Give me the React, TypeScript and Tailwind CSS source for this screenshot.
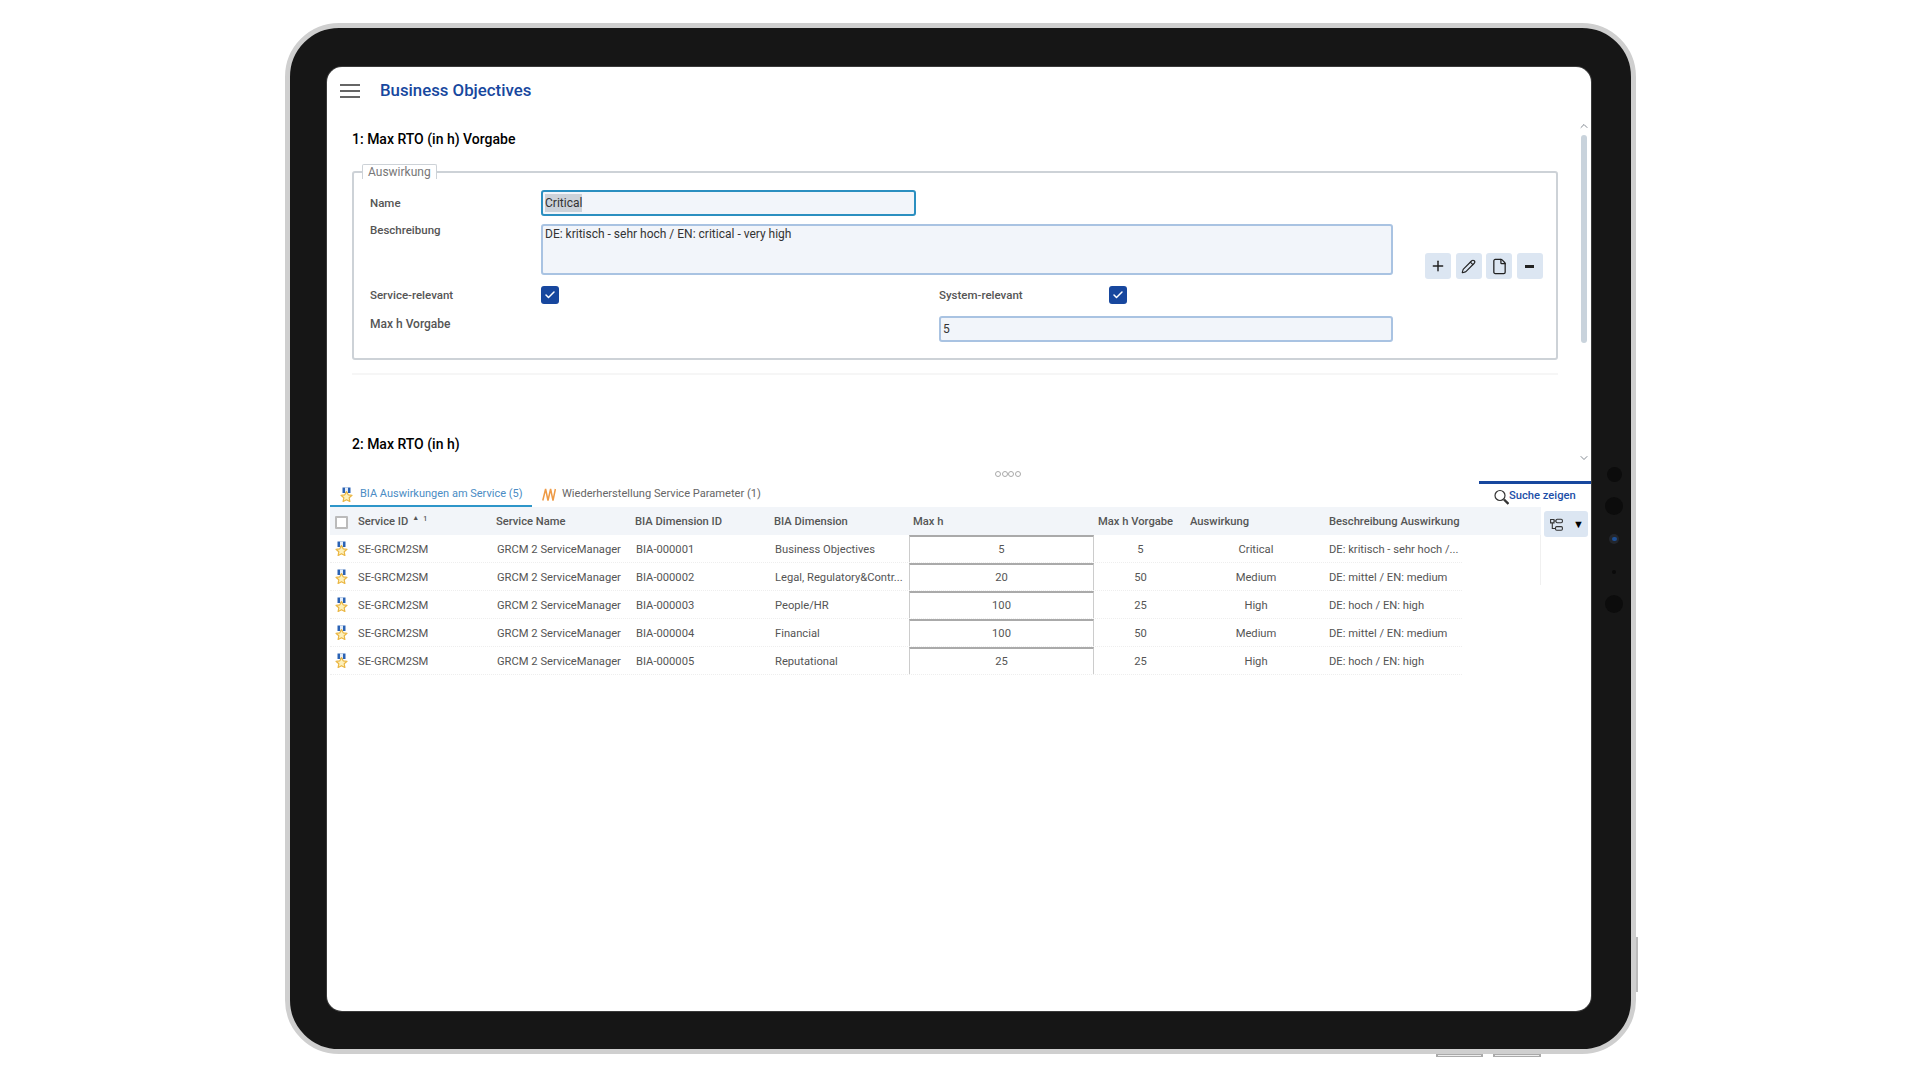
import { Check, ChevronDown, ChevronUp, File, Pencil, Plus } from 'lucide-react';

const rows = [
  { id: 'BIA-000001', dim: 'Business Objectives', max: '5', vorgabe: '5', impact: 'Critical', desc: 'DE: kritisch - sehr hoch /...' },
  { id: 'BIA-000002', dim: 'Legal, Regulatory&Contr...', max: '20', vorgabe: '50', impact: 'Medium', desc: 'DE: mittel / EN: medium' },
  { id: 'BIA-000003', dim: 'People/HR', max: '100', vorgabe: '25', impact: 'High', desc: 'DE: hoch / EN: high' },
  { id: 'BIA-000004', dim: 'Financial', max: '100', vorgabe: '50', impact: 'Medium', desc: 'DE: mittel / EN: medium' },
  { id: 'BIA-000005', dim: 'Reputational', max: '25', vorgabe: '25', impact: 'High', desc: 'DE: hoch / EN: high' },
];

function MedalIcon() {
  return (
    <svg width="13" height="15" viewBox="0 0 13 15" className="shrink-0">
      <path d="M2.5 0.5h8v5.5h-8z" fill="#2a62b4" />
      <path d="M5 0.5h3v5H5z" fill="#e4edf8" />
      <path
        d="M6.5 4.6l1.7 3.2 3.8.5-2.8 2.5.7 3.7-3.4-1.8-3.4 1.8.7-3.7L1 8.3l3.8-.5z"
        fill="#fdf0bb"
        stroke="#eab642"
        strokeWidth="1.2"
        strokeLinejoin="round"
      />
    </svg>
  );
}

function ZigzagIcon() {
  return (
    <svg width="14" height="13" viewBox="0 0 14 13" fill="none" stroke="#ee9a45" strokeWidth="1.5" className="shrink-0">
      <path d="M0.8 12.5 3.6 1 6 12.5 8.6 1 11 12.5 13.4 1" />
    </svg>
  );
}

function CheckBox() {
  return (
    <div className="flex h-[18px] w-[18px] items-center justify-center rounded-[3px] bg-[#17479e]">
      <Check size={12} strokeWidth={3} color="#fff" />
    </div>
  );
}

function ActionButton({ children }: { children: React.ReactNode }) {
  return <button className="flex h-[26px] w-[26px] items-center justify-center rounded-[3px] bg-[#dce6f2] text-[#222]">{children}</button>;
}

export default function App() {
  const labelClass = 'text-[11.5px] font-medium leading-[14px] text-[#555]';
  const inputClass = 'rounded-[3px] border-2 border-[#a9c3e2] bg-[#f2f5fa] px-[2px] text-[12px] text-[#333]';
  const gridCols = 'grid-cols-[28px_139px_139px_139px_134px_185px_93px_138px_137px]';

  return (
    <div className="h-[1080px] overflow-hidden bg-white pl-[285px] pt-[23px] font-[Roboto,sans-serif]">
      {/* device frame */}
      <div className="relative flex h-[1031px] w-[1351px] rounded-[54px] border-[5px] border-[#cfcfcf] bg-[#161616] pb-[38px] pl-[37px] pt-[39px]">
        <div className="absolute right-[-7px] top-[909px] h-[55px] w-[2px] bg-[#bbb]" />
        <div className="absolute bottom-[-8px] left-[1146px] h-[3px] w-[47px] border-x-2 border-y border-[#aaa] bg-[#eee]" />
        <div className="absolute bottom-[-8px] left-[1203px] h-[3px] w-[48px] border-x-2 border-y border-[#aaa] bg-[#eee]" />

        <div className="flex h-[944px] w-[1264px] shrink-0 flex-col overflow-hidden rounded-[15px] bg-white shadow-[0_0_0_1px_#3a3a3a]">
          <div className="flex h-[48px] shrink-0 items-center gap-[20px] pl-[13px]">
            <div className="flex w-[20px] flex-col gap-[4px]">
              <div className="h-[2px] bg-[#666]" />
              <div className="h-[2px] bg-[#666]" />
              <div className="h-[2px] bg-[#666]" />
            </div>
            <h1 className="text-[16.8px] font-medium text-[#17479e]">Business Objectives</h1>
          </div>

          {/* upper panel */}
          <div className="relative h-[350px] shrink-0 pl-[25px] pr-[33px] pt-[14px]">
            <h2 className="h-[20px] text-[14px] font-medium leading-[20px] text-black">1: Max RTO (in h) Vorgabe</h2>
            <fieldset className="mt-[15px] rounded-[3px] border-2 border-[#cdd2d7]">
              <legend className="ml-[8px] h-[15px] rounded-t-[2px] border-x border-t border-[#cdd2d7] px-[5px] text-[12px] leading-[14px] text-[#777]">
                Auswirkung
              </legend>
              <div className="flex items-center pl-[16px]">
                <div className="grid w-[1023px] grid-cols-[171px_398px_170px_1fr] pb-[16px] pt-[11px]">
                  <div className={`${labelClass} self-center`}>Name</div>
                  <div className="col-span-3 flex">
                    <div className="flex h-[26px] w-[375px] items-center rounded-[3px] border-2 border-[#2b8fc0] bg-[#f2f5fa] px-[2px] text-[12px] text-[#333]">
                      <span className="bg-[#ccd2d9]">Critical</span>
                    </div>
                  </div>

                  <div className={`${labelClass} mt-[7px]`}>Beschreibung</div>
                  <div className={`${inputClass} col-span-3 mt-[8px] h-[51px] leading-[16px]`}>DE: kritisch - sehr hoch / EN: critical - very high</div>

                  <div className={`${labelClass} mt-[11px] self-center`}>Service-relevant</div>
                  <div className="mt-[11px]"><CheckBox /></div>
                  <div className={`${labelClass} mt-[11px] self-center`}>System-relevant</div>
                  <div className="mt-[11px]"><CheckBox /></div>

                  <div className={`${labelClass} mt-[12px] self-center whitespace-nowrap pb-[10px] text-[12px]`}>Max h Vorgabe</div>
                  <div className="mt-[12px]" />
                  <div className={`${inputClass} col-span-2 mt-[12px] flex h-[26px] items-center`}>5</div>
                </div>
                <div className="mb-[5px] ml-[32px] flex gap-[4.6px]">
                  <ActionButton><Plus size={16} strokeWidth={2.2} /></ActionButton>
                  <ActionButton><Pencil size={15} strokeWidth={1.8} /></ActionButton>
                  <ActionButton><File size={17} strokeWidth={1.8} /></ActionButton>
                  <ActionButton><div className="h-[3px] w-[9px] bg-[#222]" /></ActionButton>
                </div>
              </div>
            </fieldset>
            <div className="mt-[13px] h-[2px] bg-[#f6f6f6]" />
            <h2 className="mt-[59px] h-[20px] text-[14px] font-medium leading-[20px] text-black">2: Max RTO (in h)</h2>

            <div className="absolute bottom-0 right-0 top-[5px] flex w-[14px] flex-col items-center text-[#59636d]">
              <ChevronUp size={12} strokeWidth={1.5} />
              <div className="mt-[3px] h-[208px] w-[6px] rounded-[3px] bg-[#c9d3dc]" />
              <div className="mt-[109px]"><ChevronDown size={12} strokeWidth={1.5} /></div>
            </div>
          </div>

          {/* sash */}
          <div className="flex h-[16px] shrink-0 items-center gap-[0.5px] pl-[668px] pt-[2px]">
            <div className="h-[6px] w-[6px] rounded-full border border-[#aaa]" />
            <div className="h-[6px] w-[6px] rounded-full border border-[#aaa]" />
            <div className="h-[6px] w-[6px] rounded-full border border-[#aaa]" />
            <div className="h-[6px] w-[6px] rounded-full border border-[#aaa]" />
          </div>

          {/* tab strip */}
          <div className="flex h-[26px] shrink-0 justify-between pl-[3px]">
            <div className="flex">
              <div className="flex w-[202px] items-center gap-[7px] border-b-2 border-[#2e96c9] pl-[10px] pt-[3px] text-[11px] text-[#4a8cc4]">
                <MedalIcon />
                <span>BIA Auswirkungen am Service (5)</span>
              </div>
              <div className="ml-[10px] flex items-center gap-[6px] pt-[1px] text-[11.1px] text-[#666]">
                <ZigzagIcon />
                <span>Wiederherstellung Service Parameter (1)</span>
              </div>
            </div>
            <div className="flex w-[112px] items-center border-t-[3px] border-[#17479e] pl-[15px] pt-[2px] text-[11.2px] font-medium text-[#1d4fa8]">
              <svg width="15" height="16" viewBox="0 0 15 16" fill="none" stroke="#333" className="shrink-0">
                <circle cx="6" cy="6.5" r="5" strokeWidth="1.2" />
                <path d="M10 10.5 14.5 15" strokeWidth="2.4" />
              </svg>
              <span>Suche zeigen</span>
            </div>
          </div>

          {/* table */}
          <div className="flex pl-[3px]">
            <div className="w-[1211px] shrink-0">
              <div className={`grid h-[28px] items-center bg-[#f2f5f9] pt-[3px] text-[11.2px] font-medium text-[#555] ${gridCols}`}>
                <div className="pl-[5px]"><div className="h-[13px] w-[13px] rounded-[1px] border-2 border-[#bbb] bg-white" /></div>
                <div className="flex items-start">
                  Service ID
                  <span className="ml-[4px] mt-[-1px] text-[7px] leading-[10px]">▲</span>
                  <span className="ml-[4px] text-[7px] leading-[10px]">1</span>
                </div>
                <div className="-ml-[1px]">Service Name</div>
                <div className="-ml-[1px]">BIA Dimension ID</div>
                <div className="-ml-[1px]">BIA Dimension</div>
                <div className="pl-[4px]">Max h</div>
                <div className="whitespace-nowrap pl-[4px]">Max h Vorgabe</div>
                <div className="pl-[3px]">Auswirkung</div>
                <div className="whitespace-nowrap pl-[4px]">Beschreibung Auswirkung</div>
              </div>
              <div className="flex">
                <div className="w-[1132px] shrink-0">
                  {rows.map((row) => (
                    <div key={row.id} className={`grid h-[28px] items-center border-b border-dotted border-[#eee] text-[11.2px] text-[#555] ${gridCols}`}>
                      <div className="pl-[5px]"><MedalIcon /></div>
                      <div className="pt-[4px]">SE-GRCM2SM</div>
                      <div className="whitespace-nowrap pt-[4px]">GRCM 2 ServiceManager</div>
                      <div className="pt-[4px]">{row.id}</div>
                      <div className="whitespace-nowrap pt-[4px]">{row.dim}</div>
                      <div className="flex h-full items-center justify-center border-x border-t-2 border-x-[#ccc] border-t-[#aaa] pt-[2px]">{row.max}</div>
                      <div className="pt-[4px] text-center">{row.vorgabe}</div>
                      <div className="pt-[4px] text-center">{row.impact}</div>
                      <div className="whitespace-nowrap pl-[4px] pt-[4px]">{row.desc}</div>
                    </div>
                  ))}
                </div>
                <div className="h-[50px] flex-1 border-r border-[#f0f0f0]" />
              </div>
            </div>
            <div className="ml-[3px] mt-[4px] flex h-[26px] w-[44px] items-center justify-between rounded-[3px] bg-[#dce6f2] pl-[6px] pr-[4px]">
              <svg width="13" height="13" viewBox="0 0 13 13" fill="none" stroke="#333" strokeWidth="1.1">
                <path d="M0.6 1.5h3.4v3.4h-3.4zM2.3 5v5.5h3.2M4 3h2" />
                <rect x="6" y="1.2" width="6.4" height="3.6" rx="1.2" />
                <rect x="5.5" y="8.6" width="6.9" height="3.6" rx="1.2" />
              </svg>
              <span className="text-[11px] leading-none text-black">▼</span>
            </div>
          </div>
        </div>

        {/* right bezel with sensors */}
        <div className="flex w-[40px] flex-col items-center pl-[6px]">
          <div className="mt-[400px] h-[15px] w-[15px] rounded-full bg-[#0c0c0c]" />
          <div className="mt-[15px] h-[18px] w-[18px] rounded-full bg-[#0c0c0c]" />
          <div className="mt-[19px] flex h-[10px] w-[10px] items-center justify-center rounded-full bg-[#23262c]">
            <div className="h-[4px] w-[5px] rounded-full bg-[#1d4f94]" />
          </div>
          <div className="mt-[26px] h-[4px] w-[4px] rounded-full bg-[#0a0a0a]" />
          <div className="mt-[21px] h-[18px] w-[18px] rounded-full bg-[#0c0c0c]" />
        </div>
      </div>
    </div>
  );
}
